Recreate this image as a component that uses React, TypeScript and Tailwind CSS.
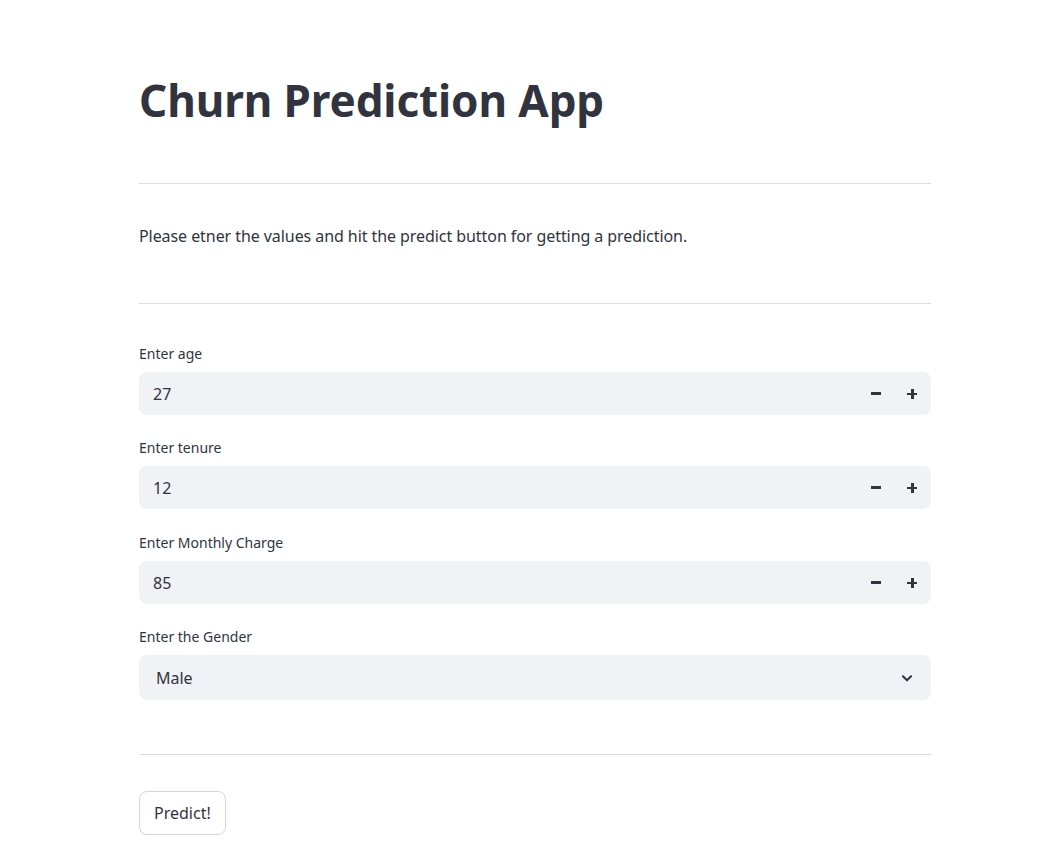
import { useState } from "react";

const font = { fontFamily: '"Noto Sans", "Liberation Sans", sans-serif' };

function NumberField({ label, value }: { label: string; value: number }) {
  const [v, setV] = useState(value);
  return (
    <div className="flex flex-col">
      <label className="text-[14px] leading-[20px] h-[20px] text-[#31333f] mb-[8px]">{label}</label>
      <div className="h-[43px] rounded-[8px] bg-[#f0f2f6] flex items-center">
        <span className="flex-1 pl-[14px] text-[16px] text-[#31333f]">{v}</span>
        <button onClick={() => setV(v - 1)} className="w-[36px] h-full flex items-center justify-center">
          <span className="block w-[10px] h-[2.5px] bg-[#31333f]" />
        </button>
        <button onClick={() => setV(v + 1)} className="w-[36px] h-full flex items-center justify-center mr-[1px]">
          <span className="relative block w-[10px] h-[10px]">
            <span className="absolute left-0 top-[4px] w-[10px] h-[2.5px] bg-[#31333f]" />
            <span className="absolute top-0 left-[4px] w-[2.5px] h-[10px] bg-[#31333f]" />
          </span>
        </button>
      </div>
    </div>
  );
}

export default function App() {
  return (
    <main className="min-h-screen bg-white text-[#31333f]" style={font}>
      <div className="ml-[139px] w-[792px] pt-[70px]">
        <h1 className="text-[44px] leading-[60px] font-bold text-[#31333f] tracking-[-0.1px]">Churn Prediction App</h1>

        <hr className="mt-[53px] border-0 h-px bg-[#dcdcdf]" />

        <p className="mt-[40px] text-[16px] leading-[24px] tracking-[-0.07px]">
          Please etner the values and hit the predict button for getting a prediction.
        </p>

        <hr className="mt-[55px] border-0 h-px bg-[#dcdcdf]" />

        <div className="mt-[40px] flex flex-col gap-[23px]">
          <NumberField label="Enter age" value={27} />
          <NumberField label="Enter tenure" value={12} />
          <div className="mt-[1px]">
            <NumberField label="Enter Monthly Charge" value={85} />
          </div>

          <div className="flex flex-col">
            <label className="text-[14px] leading-[20px] h-[20px] text-[#31333f] mb-[8px]">Enter the Gender</label>
            <div className="h-[45px] rounded-[8px] bg-[#f0f2f6] flex items-center">
              <span className="flex-1 pl-[17px] text-[16px]">Male</span>
              <svg width="14" height="14" viewBox="0 0 24 24" className="mr-[17px]" fill="none" stroke="#31333f" strokeWidth="3.5" strokeLinecap="round" strokeLinejoin="round">
                <path d="M5 9l7 7 7-7" />
              </svg>
            </div>
          </div>
        </div>

        <hr className="mt-[54px] border-0 h-px bg-[#dcdcdf]" />

        <button className="mt-[36px] h-[44px] px-[14px] rounded-[8px] border border-[#d6d6d9] bg-white text-[16px] text-[#31333f]">
          Predict!
        </button>
      </div>
    </main>
  );
}
